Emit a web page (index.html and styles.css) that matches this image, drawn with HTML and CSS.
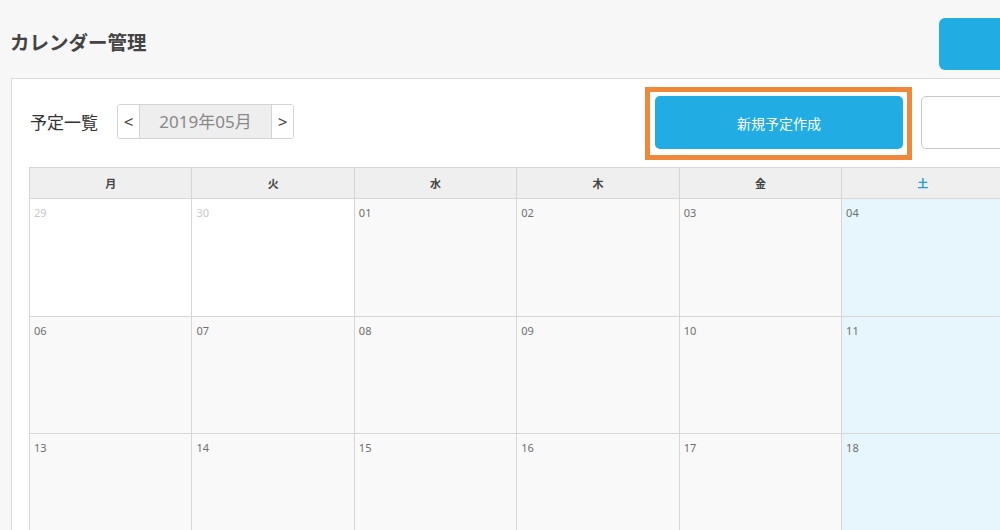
FILE: index.html
```html
<!DOCTYPE html>
<html lang="ja">
<head>
    <meta charset="UTF-8">
    <meta name="viewport" content="width=device-width, initial-scale=1.0">
    <title>カレンダー管理</title>
    <link rel="stylesheet" href="styles.css">
</head>
<body>
    <div class="page">
        <!-- Header -->
        <div class="page-header">
            <h1>カレンダー管理</h1>
            <button class="top-btn"></button>
        </div>

        <!-- Panel -->
        <div class="panel">
            <div class="toolbar">
                <div class="toolbar-left">
                    <span class="list-title">予定一覧</span>
                    <div class="pager">
                        <button class="pager-arrow">&lt;</button>
                        <span class="pager-month">2019年05月</span>
                        <button class="pager-arrow">&gt;</button>
                    </div>
                </div>
                <div class="highlight">
                    <button class="create-btn">新規予定作成</button>
                </div>
                <button class="sub-btn"></button>
            </div>

            <table class="calendar">
                <thead>
                    <tr>
                        <th>月</th>
                        <th>火</th>
                        <th>水</th>
                        <th>木</th>
                        <th>金</th>
                        <th class="sat">土</th>
                        <th class="sun">日</th>
                    </tr>
                </thead>
                <tbody>
                    <tr>
                        <td class="other"><span class="day">29</span></td>
                        <td class="other"><span class="day">30</span></td>
                        <td><span class="day">01</span></td>
                        <td><span class="day">02</span></td>
                        <td><span class="day">03</span></td>
                        <td class="sat"><span class="day">04</span></td>
                        <td class="sun"><span class="day">05</span></td>
                    </tr>
                    <tr>
                        <td><span class="day">06</span></td>
                        <td><span class="day">07</span></td>
                        <td><span class="day">08</span></td>
                        <td><span class="day">09</span></td>
                        <td><span class="day">10</span></td>
                        <td class="sat"><span class="day">11</span></td>
                        <td class="sun"><span class="day">12</span></td>
                    </tr>
                    <tr>
                        <td><span class="day">13</span></td>
                        <td><span class="day">14</span></td>
                        <td><span class="day">15</span></td>
                        <td><span class="day">16</span></td>
                        <td><span class="day">17</span></td>
                        <td class="sat"><span class="day">18</span></td>
                        <td class="sun"><span class="day">19</span></td>
                    </tr>
                </tbody>
            </table>
        </div>
    </div>
</body>
</html>
```

FILE: styles.css
```css
* {
    margin: 0;
    padding: 0;
    box-sizing: border-box;
    font-family: "Noto Sans", "Noto Sans CJK JP", sans-serif;
}

body {
    background: #f7f7f7;
    overflow: hidden;
    color: #333;
}

.page {
    width: 1175px;
    margin-left: 10px;
}

/* Header */
.page-header {
    display: flex;
    align-items: center;
    padding-top: 18px;
    margin-bottom: 8px;
}

.page-header h1 {
    font-size: 19.5px;
    font-weight: bold;
    color: #444;
    margin-bottom: 5px;
}

.top-btn {
    margin-left: auto;
    width: 246px;
    height: 52px;
    background: #21ade3;
    border: none;
    border-radius: 6px;
}

/* Panel */
.panel {
    margin-left: 1px;
    background: #fff;
    border: 1px solid #dcdcdc;
    padding: 8px 15px 40px 17px;
}

.toolbar {
    display: flex;
    align-items: flex-start;
    margin-bottom: 7px;
}

.toolbar-left {
    display: flex;
    align-items: center;
    margin-top: 17px;
    margin-left: 1px;
}

.list-title {
    font-size: 17px;
    color: #333;
    margin-right: 19px;
}

.pager {
    display: flex;
    height: 35px;
    border: 1px solid #d4d4d4;
    border-radius: 3px;
    overflow: hidden;
}

.pager-arrow {
    width: 21px;
    background: #fff;
    border: none;
    font-size: 17px;
    color: #444;
}

.pager-month {
    width: 133px;
    background: #eeeeee;
    border-left: 1px solid #d4d4d4;
    border-right: 1px solid #d4d4d4;
    font-size: 17px;
    color: #888;
    text-align: center;
    line-height: 33px;
}

.highlight {
    margin-left: auto;
    border: 5px solid #f0883a;
    padding: 4px 4px 6px 5px;
    background: #fff;
}

.create-btn {
    display: block;
    width: 248px;
    height: 53px;
    background: #21ade3;
    border: none;
    border-radius: 5px;
    color: #fff;
    font-size: 14px;
}

.sub-btn {
    margin-left: 9px;
    margin-top: 9px;
    width: 248px;
    height: 53px;
    background: #fff;
    border: 1px solid #c8c8c8;
    border-radius: 5px;
}

/* Calendar */
.calendar {
    width: 1138px;
    table-layout: fixed;
    border-collapse: collapse;
}

.calendar th {
    height: 31px;
    background: #efefef;
    border: 1px solid #d6d6d6;
    font-size: 11px;
    font-weight: bold;
    color: #444;
}

.calendar th.sat {
    color: #1fa0d8;
}

.calendar th.sun {
    color: #e05555;
}

.calendar td {
    height: 117.5px;
    background: #f9f9f9;
    border: 1px solid #d6d6d6;
    vertical-align: top;
    padding: 6px 4px;
    font-size: 11px;
    line-height: 1.4;
}

.calendar td.other {
    background: #fff;
}

.calendar td.sat {
    background: #e7f5fd;
}

.calendar td.sun {
    background: #fdeeee;
}

.day {
    color: #6f6f6f;
}

.other .day {
    color: #c8c8c8;
}
```
